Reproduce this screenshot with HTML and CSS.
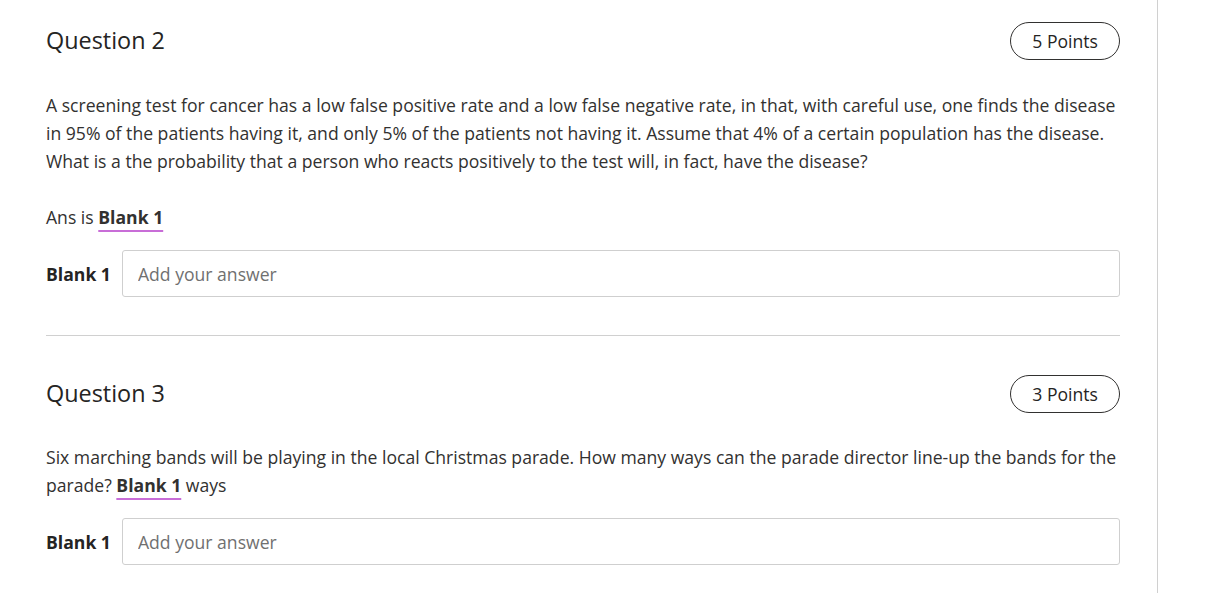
FILE: index.html
```html
<!DOCTYPE html>
<html lang="en">
<head>
<meta charset="utf-8">
<title>Quiz</title>
<link rel="stylesheet" href="styles.css">
</head>
<body>
<div class="page">
  <main class="content">
    <section class="question">
      <header class="q-head">
        <h2 class="q-title">Question 2</h2>
        <span class="points">5 Points</span>
      </header>
      <p class="q-text">A screening test for cancer has a low false positive rate and a low false negative rate, in that, with careful use, one finds the disease in 95% of the patients having it, and only 5% of the patients not having it. Assume that 4% of a certain population has the disease. What is a the probability that a person who reacts positively to the test will, in fact, have the disease?</p>
      <p class="q-text">Ans is <span class="blank">Blank 1</span></p>
      <div class="answer-row">
        <label class="answer-label">Blank 1</label>
        <input class="answer-input" type="text" placeholder="Add your answer">
      </div>
    </section>
    <hr class="divider">
    <section class="question">
      <header class="q-head">
        <h2 class="q-title">Question 3</h2>
        <span class="points">3 Points</span>
      </header>
      <p class="q-text">Six marching bands will be playing in the local Christmas parade. How many ways can the parade director line-up the bands for the parade? <span class="blank">Blank 1</span> ways</p>
      <div class="answer-row">
        <label class="answer-label">Blank 1</label>
        <input class="answer-input" type="text" placeholder="Add your answer">
      </div>
    </section>
  </main>
</div>
</body>
</html>
```
FILE: styles.css
```css
html, body {
  margin: 0;
  padding: 0;
  background: #fff;
}
body {
  font-family: "Open Sans", "Noto Sans", "Liberation Sans", sans-serif;
  color: #323130;
  overflow: hidden;
}
.page {
  width: 1158px;
  height: 593px;
  border-right: 1px solid #d0d0d0;
  box-sizing: border-box;
}
.content {
  width: 1074px;
  margin-left: 46px;
  padding-top: 22px;
}
.q-head {
  display: flex;
  justify-content: space-between;
  align-items: center;
  height: 38px;
}
.q-title {
  margin: 0 0 2px;
  font-size: 23.4px;
  font-weight: 400;
  line-height: 30px;
  color: #252423;
}
.points {
  box-sizing: border-box;
  height: 38px;
  padding: 0 21px;
  border: 1px solid #323130;
  border-radius: 19px;
  font-size: 17.6px;
  line-height: 36px;
  color: #252423;
}
.q-text {
  margin: 28px 0 0;
  font-size: 17.6px;
  line-height: 28px;
}
.q-head + .q-text {
  margin-top: 31px;
}
.blank {
  font-weight: 700;
  text-decoration: underline;
  text-decoration-color: #c86dd7;
  text-decoration-thickness: 2px;
  text-underline-offset: 6px;
}
.answer-row {
  display: flex;
  align-items: center;
  gap: 11px;
  margin-top: 19px;
}
.answer-label {
  font-size: 17.6px;
  font-weight: 700;
  color: #252423;
}
.answer-input {
  flex: 1;
  box-sizing: border-box;
  height: 47px;
  margin: 0;
  padding: 0 15px;
  border: 1px solid #cfcfcf;
  border-radius: 3px;
  font-family: inherit;
  font-size: 17.6px;
  color: #323130;
  outline: none;
}
.answer-input::placeholder {
  color: #707070;
}
.divider {
  margin: 38px 0 39px;
  border: 0;
  border-top: 1px solid #d0d0d0;
  height: 0;
}
.question + .divider + .question .q-head + .q-text {
  margin-top: 30px;
}
```
